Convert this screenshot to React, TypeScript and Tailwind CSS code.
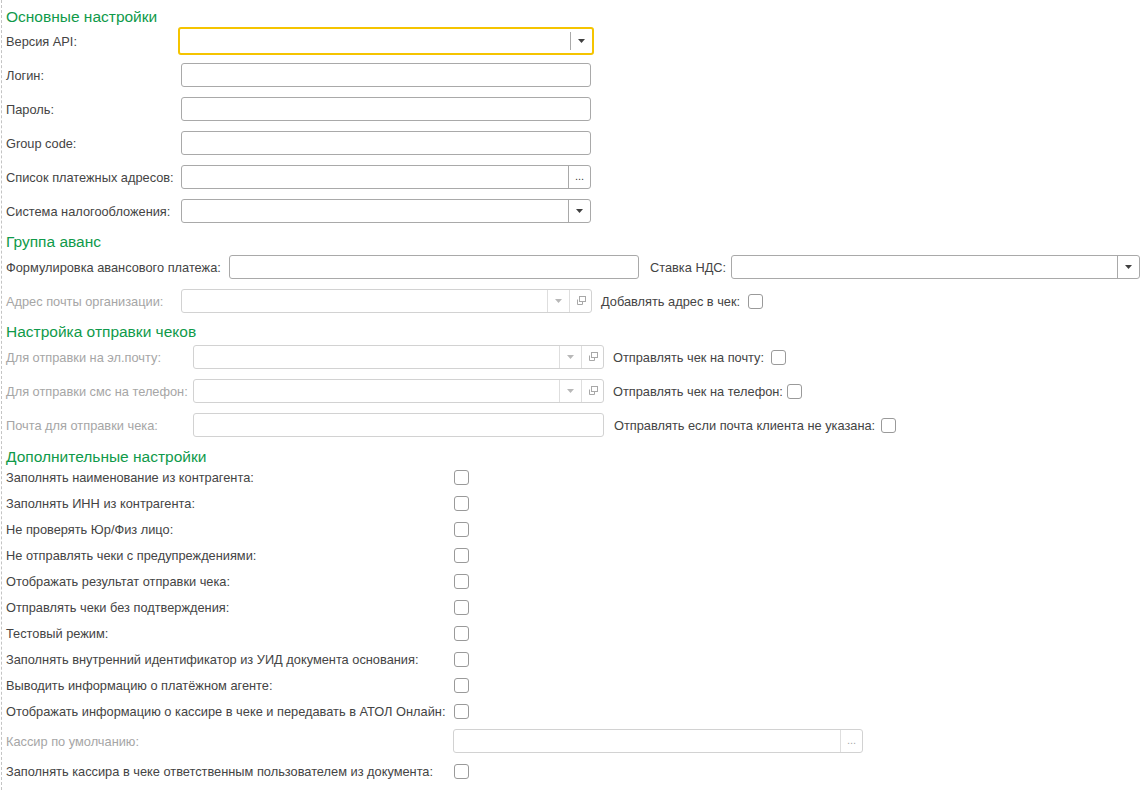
import React from "react";

type Btn = "drop" | "dots" | "open";

function Arrow({ disabled }: { disabled?: boolean }) {
  return (
    <svg width="7" height="4" viewBox="0 0 7 4">
      <path d="M0 0 H7 L3.5 4 Z" fill={disabled ? "#b8b8b8" : "#404040"} />
    </svg>
  );
}

function OpenIcon({ disabled }: { disabled?: boolean }) {
  const c = disabled ? "#a8a8a8" : "#404040";
  return (
    <svg width="10" height="10" viewBox="0 0 10 10">
      <rect x="3.5" y="0.5" width="6" height="5" fill="none" stroke={c} strokeWidth="1" />
      <path d="M1.5 3.5 V8.5 H6.5 V6" fill="none" stroke={c} strokeWidth="1" />
    </svg>
  );
}

function Field({
  w,
  buttons = [],
  disabled,
  focused,
}: {
  w: string;
  buttons?: Btn[];
  disabled?: boolean;
  focused?: boolean;
}) {
  const border = focused
    ? "border-2 border-[#f5c400] h-[28px] -my-[2px] -ml-[3px]"
    : disabled
    ? "border border-[#d2d2d2] h-[24px]"
    : "border border-[#a9a9a9] h-[24px]";
  const sep = disabled ? "border-[#dedede]" : "border-[#a9a9a9]";
  return (
    <div className={`${w} ${border} rounded-[3px] bg-white flex items-stretch shrink-0`}>
      <div className="flex-1" />
      {buttons.map((b, i) => (
        <div
          key={i}
          className={`w-[22px] border-l ${sep} flex items-center justify-center ${
            focused ? "my-[3px]" : ""
          }`}
        >
          {b === "drop" && <Arrow disabled={disabled} />}
          {b === "open" && <OpenIcon disabled={disabled} />}
          {b === "dots" && (
            <span
              className={`text-[11px] leading-none -mt-[2px] ${
                disabled ? "text-[#a8a8a8]" : "text-[#404040]"
              }`}
            >
              ...
            </span>
          )}
        </div>
      ))}
    </div>
  );
}

function Check() {
  return <div className="w-[15px] h-[15px] border border-[#9a9a9a] rounded-[3px] bg-white shrink-0" />;
}

function Label({ w, children, disabled }: { w: string; children: React.ReactNode; disabled?: boolean }) {
  return (
    <div
      className={`${w} shrink-0 whitespace-nowrap ${disabled ? "text-[#a6a6a6]" : "text-[#444444]"}`}
    >
      {children}
    </div>
  );
}

function Header({ children }: { children: React.ReactNode }) {
  return <div className="h-[20px] leading-[20px] text-[15.5px] text-[#0f9a4a] whitespace-nowrap">{children}</div>;
}

const checks = [
  "Заполнять наименование из контрагента:",
  "Заполнять ИНН из контрагента:",
  "Не проверять Юр/Физ лицо:",
  "Не отправлять чеки с предупреждениями:",
  "Отображать результат отправки чека:",
  "Отправлять чеки без подтверждения:",
  "Тестовый режим:",
  "Заполнять внутренний идентификатор из УИД документа основания:",
  "Выводить информацию о платёжном агенте:",
  "Отображать информацию о кассире в чеке и передавать в АТОЛ Онлайн:",
];

export default function App() {
  return (
    <div
      className="w-[1146px] h-[790px] bg-white overflow-hidden text-[12.8px] leading-[15px]"
      style={{ fontFamily: '"Liberation Sans", Arial, sans-serif' }}
    >
      <div className="ml-[1px] h-full border-l border-dashed border-[#c4c4c4] pl-[4px] pt-[7px]">
        {/* Section 1 */}
        <Header>Основные настройки</Header>
        <div className="mt-[2px] flex flex-col gap-[10px]">
          <div className="flex items-center h-[24px]">
            <Label w="w-[175px]">Версия API:</Label>
            <Field w="w-[416px]" buttons={["drop"]} focused />
          </div>
          <div className="flex items-center h-[24px]">
            <Label w="w-[175px]">Логин:</Label>
            <Field w="w-[410px]" />
          </div>
          <div className="flex items-center h-[24px]">
            <Label w="w-[175px]">Пароль:</Label>
            <Field w="w-[410px]" />
          </div>
          <div className="flex items-center h-[24px]">
            <Label w="w-[175px]">Group code:</Label>
            <Field w="w-[410px]" />
          </div>
          <div className="flex items-center h-[24px]">
            <Label w="w-[175px]">Список платежных адресов:</Label>
            <Field w="w-[410px]" buttons={["dots"]} />
          </div>
          <div className="flex items-center h-[24px]">
            <Label w="w-[175px]">Система налогообложения:</Label>
            <Field w="w-[410px]" buttons={["drop"]} />
          </div>
        </div>

        {/* Section 2 */}
        <div className="mt-[9px]">
          <Header>Группа аванс</Header>
        </div>
        <div className="mt-[3px] flex flex-col gap-[10px]">
          <div className="flex items-center h-[24px]">
            <Label w="w-[223px]">Формулировка авансового платежа:</Label>
            <Field w="w-[410px]" />
            <div className="ml-[11px]">
              <Label w="w-[81px]">Ставка НДС:</Label>
            </div>
            <Field w="w-[409px]" buttons={["drop"]} />
          </div>
          <div className="flex items-center h-[24px]">
            <Label w="w-[175px]" disabled>
              Адрес почты организации:
            </Label>
            <Field w="w-[411px]" buttons={["drop", "open"]} disabled />
            <div className="ml-[9px]">
              <Label w="w-[147px]">Добавлять адрес в чек:</Label>
            </div>
            <Check />
          </div>
        </div>

        {/* Section 3 */}
        <div className="mt-[9px]">
          <Header>Настройка отправки чеков</Header>
        </div>
        <div className="mt-[3px] flex flex-col gap-[10px]">
          <div className="flex items-center h-[24px]">
            <Label w="w-[187px]" disabled>
              Для отправки на эл.почту:
            </Label>
            <Field w="w-[411px]" buttons={["drop", "open"]} disabled />
            <div className="ml-[9px]">
              <Label w="w-[158px]">Отправлять чек на почту:</Label>
            </div>
            <Check />
          </div>
          <div className="flex items-center h-[24px]">
            <Label w="w-[187px]" disabled>
              Для отправки смс на телефон:
            </Label>
            <Field w="w-[411px]" buttons={["drop", "open"]} disabled />
            <div className="ml-[9px]">
              <Label w="w-[174px]">Отправлять чек на телефон:</Label>
            </div>
            <Check />
          </div>
          <div className="flex items-center h-[24px]">
            <Label w="w-[187px]" disabled>
              Почта для отправки чека:
            </Label>
            <Field w="w-[411px]" disabled />
            <div className="ml-[10px]">
              <Label w="w-[267px]">Отправлять если почта клиента не указана:</Label>
            </div>
            <Check />
          </div>
        </div>

        {/* Section 4 */}
        <div className="mt-[10px]">
          <Header>Дополнительные настройки</Header>
        </div>
        <div className="flex flex-col gap-[6px]">
          {checks.map((c) => (
            <div key={c} className="flex items-center h-[20px]">
              <Label w="w-[448px]">{c}</Label>
              <Check />
            </div>
          ))}
        </div>
        <div className="mt-[8px] flex items-center h-[24px]">
          <Label w="w-[447px]" disabled>
            Кассир по умолчанию:
          </Label>
          <Field w="w-[410px]" buttons={["dots"]} disabled />
        </div>
        <div className="mt-[8px] flex items-center h-[20px]">
          <Label w="w-[448px]">Заполнять кассира в чеке ответственным пользователем из документа:</Label>
          <Check />
        </div>
      </div>
    </div>
  );
}
